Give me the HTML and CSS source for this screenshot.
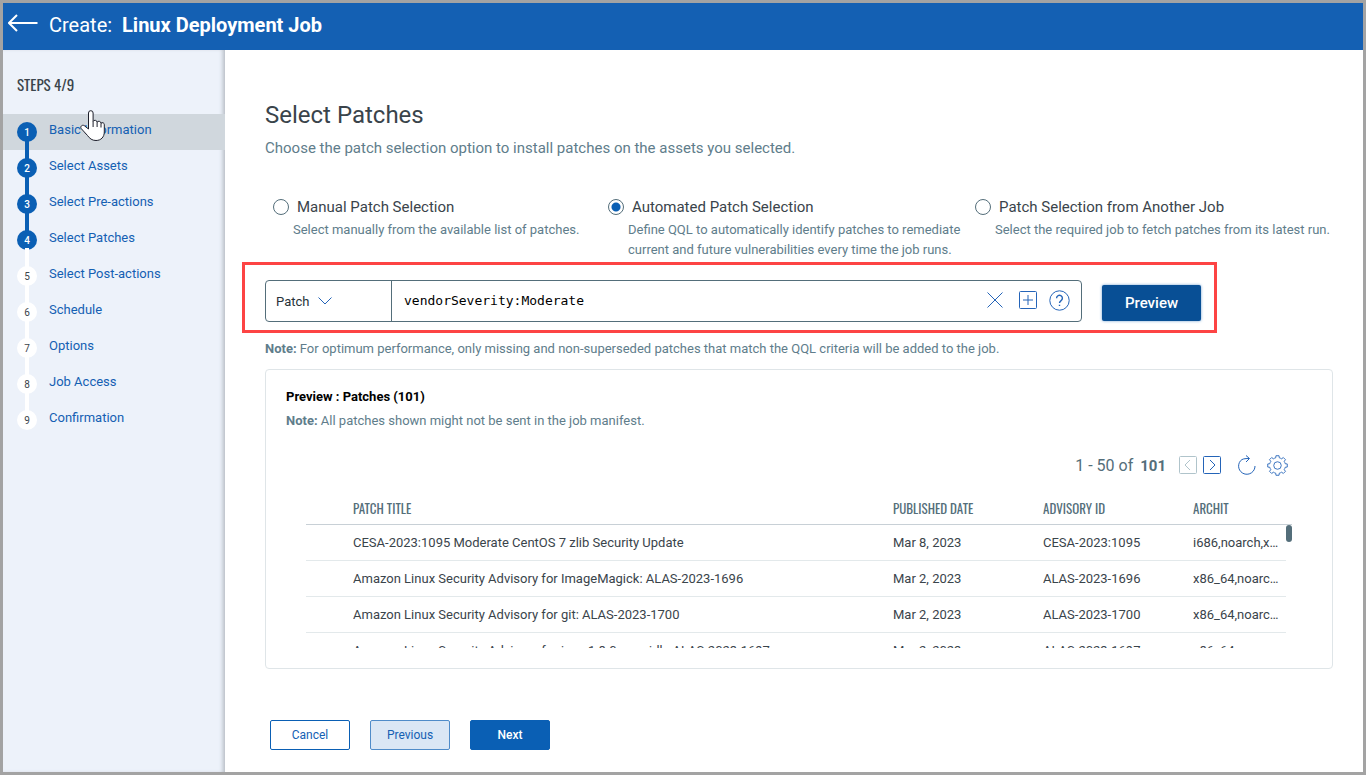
FILE: index.html
```html
<!DOCTYPE html>
<html lang="en">
<head>
    <meta charset="UTF-8">
    <meta name="viewport" content="width=device-width, initial-scale=1.0">
    <title>Create: Linux Deployment Job</title>
    <link rel="stylesheet" href="styles.css">
</head>
<body>
    <header class="topbar">
        <a href="#" class="back" aria-label="Back">
            <svg width="30" height="18" viewBox="0 0 30 18"><path d="M9 1 1 9l8 8M1 9h28.500" /></svg>
        </a>
        <h1>Create: <strong>Linux Deployment Job</strong></h1>
    </header>

    <div class="layout">
        <!-- Wizard steps -->
        <nav class="sidebar">
            <h2>STEPS 4/9</h2>
            <ol class="steps">
                <li class="done hover"><span class="num">1</span><a href="#">Basic Information</a></li>
                <li class="done"><span class="num">2</span><a href="#">Select Assets</a></li>
                <li class="done"><span class="num">3</span><a href="#">Select Pre-actions</a></li>
                <li class="current"><span class="num">4</span><a href="#">Select Patches</a></li>
                <li><span class="num">5</span><a href="#">Select Post-actions</a></li>
                <li><span class="num">6</span><a href="#">Schedule</a></li>
                <li><span class="num">7</span><a href="#">Options</a></li>
                <li><span class="num">8</span><a href="#">Job Access</a></li>
                <li><span class="num">9</span><a href="#">Confirmation</a></li>
            </ol>
            <svg class="pointer" width="28" height="34" viewBox="0 0 28 34">
                <path d="M9.500 20V4a2.300 2.300 0 0 1 4.600 0v8.500a2.100 2.100 0 0 1 4 .8 2.100 2.100 0 0 1 3.900 1 1.900 1.900 0 0 1 3.300 1.500V23c0 5-3.300 8.500-8.300 8.500-4 0-6.300-2-8.500-5l-6.200-6.800c-1.600-2 .8-4.300 2.900-3.100z" />
                <path d="M14.100 12.500V18M18.100 13.300V18M22 14.300V18.500" />
            </svg>
        </nav>

        <main class="content">
            <h2 class="title">Select Patches</h2>
            <p class="subtitle">Choose the patch selection option to install patches on the assets you selected.</p>

            <div class="options">
                <div class="option">
                    <label><input type="radio" name="mode" value="manual">Manual Patch Selection</label>
                    <p>Select manually from the available list of patches.</p>
                </div>
                <div class="option">
                    <label><input type="radio" name="mode" value="auto" checked>Automated Patch Selection</label>
                    <p>Define QQL to automatically identify patches to remediate current and future vulnerabilities every time the job runs.</p>
                </div>
                <div class="option">
                    <label><input type="radio" name="mode" value="job">Patch Selection from Another Job</label>
                    <p>Select the required job to fetch patches from its latest run.</p>
                </div>
            </div>

            <!-- QQL search -->
            <form class="search-row">
                <div class="search">
                    <div class="scope">
                        <select aria-label="Search scope">
                            <option>Patch</option>
                        </select>
                        <svg width="14" height="8" viewBox="0 0 14 8"><path d="M.5 .5 7 7l6.500-6.500" /></svg>
                    </div>
                    <input type="text" class="query" aria-label="Query" value="vendorSeverity:Moderate" spellcheck="false">
                    <div class="tools">
                        <button type="button" aria-label="Clear">
                            <svg width="16" height="16" viewBox="0 0 16 16"><path d="M.5 .5l15 15M15.500 .5l-15 15" /></svg>
                        </button>
                        <button type="button" aria-label="Add">
                            <svg width="18" height="18" viewBox="0 0 18 18"><rect x=".5" y=".5" width="17" height="17" rx="1" /><path d="M9 4v10M4 9h10" /></svg>
                        </button>
                        <button type="button" aria-label="Help">
                            <svg width="21" height="21" viewBox="0 0 21 21"><circle cx="10.500" cy="10.500" r="9.700" /><path stroke-width="1.400" d="M7.600 8.300a2.900 2.900 0 1 1 4.500 2.300c-1.100.8-1.600 1.200-1.600 2.500M10.500 14.700v1.300" /></svg>
                        </button>
                    </div>
                </div>
                <button type="button" class="btn-preview">Preview</button>
            </form>

            <p class="note"><strong>Note:</strong> For optimum performance, only missing and non-superseded patches that match the QQL criteria will be added to the job.</p>

            <section class="card">
                <h3>Preview : Patches (101)</h3>
                <p class="note"><strong>Note:</strong> All patches shown might not be sent in the job manifest.</p>

                <div class="pager">
                    <span class="range">1 - 50 of <strong>101</strong></span>
                    <button type="button" class="prev" aria-label="Previous page" disabled>
                        <svg width="18" height="18" viewBox="0 0 18 18"><rect x=".5" y=".5" width="17" height="17" rx="1" /><path d="M11 4 6 9l5 5" /></svg>
                    </button>
                    <button type="button" class="next" aria-label="Next page">
                        <svg width="18" height="18" viewBox="0 0 18 18"><rect x=".5" y=".5" width="17" height="17" rx="1" /><path d="M7 4l5 5-5 5" /></svg>
                    </button>
                    <button type="button" class="refresh" aria-label="Refresh">
                        <svg width="18" height="20" viewBox="0 0 18 20"><path d="M17 11a8.200 8.200 0 1 1-14.500-5.200C4.300 3.800 6.500 3.500 11 3.500M8 .5l3.500 3-3.500 3.500" /></svg>
                    </button>
                    <button type="button" class="settings" aria-label="Settings">
                        <svg width="21" height="21" viewBox="0 0 24 24">
                            <path d="M20.770 9.980 23.160 10.230V13.770L20.770 14.020A9 9 0 0 1 19.630 16.770L21.140 18.640 18.640 21.140 16.770 19.630A9 9 0 0 1 14.020 20.770L13.770 23.160H10.230L9.980 20.770A9 9 0 0 1 7.230 19.630L5.360 21.140 2.860 18.640 4.370 16.770A9 9 0 0 1 3.230 14.020L.84 13.770V10.230L3.230 9.980A9 9 0 0 1 4.370 7.230L2.860 5.360 5.360 2.860 7.230 4.370A9 9 0 0 1 9.980 3.230L10.230 .84H13.770L14.020 3.230A9 9 0 0 1 16.770 4.370L18.640 2.860 21.140 5.360 19.630 7.230A9 9 0 0 1 20.770 9.980z" />
                            <circle cx="12" cy="12" r="4.300" />
                        </svg>
                    </button>
                </div>

                <div class="grid">
                    <table>
                        <thead>
                            <tr>
                                <th class="col-check"></th>
                                <th>PATCH TITLE</th>
                                <th class="col-mid">PUBLISHED DATE</th>
                                <th class="col-mid">ADVISORY ID</th>
                                <th class="col-arch">ARCHIT</th>
                            </tr>
                        </thead>
                    </table>
                    <div class="rows">
                        <table>
                            <tbody>
                                <tr>
                                    <td class="col-check"></td>
                                    <td>CESA-2023:1095 Moderate CentOS 7 zlib Security Update</td>
                                    <td class="col-mid">Mar 8, 2023</td>
                                    <td class="col-mid">CESA-2023:1095</td>
                                    <td class="col-arch">i686,noarch,x…</td>
                                </tr>
                                <tr>
                                    <td></td>
                                    <td>Amazon Linux Security Advisory for ImageMagick: ALAS-2023-1696</td>
                                    <td>Mar 2, 2023</td>
                                    <td>ALAS-2023-1696</td>
                                    <td>x86_64,noarc…</td>
                                </tr>
                                <tr>
                                    <td></td>
                                    <td>Amazon Linux Security Advisory for git: ALAS-2023-1700</td>
                                    <td>Mar 2, 2023</td>
                                    <td>ALAS-2023-1700</td>
                                    <td>x86_64,noarc…</td>
                                </tr>
                                <tr>
                                    <td></td>
                                    <td>Amazon Linux Security Advisory for java-1.8.0-openjdk: ALAS-2023-1697</td>
                                    <td>Mar 2, 2023</td>
                                    <td>ALAS-2023-1697</td>
                                    <td>x86_64</td>
                                </tr>
                            </tbody>
                        </table>
                        <div class="thumb"></div>
                    </div>
                </div>
            </section>

            <div class="actions">
                <button type="button" class="btn">Cancel</button>
                <button type="button" class="btn btn-prev">Previous</button>
                <button type="button" class="btn btn-next">Next</button>
            </div>
        </main>
    </div>
</body>
</html>
```
FILE: styles.css
```css
* {
    box-sizing: border-box;
}
body {
    margin: 0;
    min-height: 100vh;
    display: flex;
    flex-direction: column;
    border: 3px solid #a3a3a3;
    font-family: Roboto, sans-serif;
    font-size: 13px;
    color: #3a444b;
    background-color: #fff;
}
h1, h2, h3, p, ol {
    margin: 0;
    padding: 0;
}
a {
    text-decoration: none;
}
button, input, select {
    font-family: inherit;
}
button {
    padding: 0;
    cursor: pointer;
}
svg {
    display: block;
    fill: none;
    stroke: #2464b8;
}

/* Top bar */
.topbar {
    display: flex;
    align-items: center;
    height: 47px;
    padding: 0 5px 4px;
    background-color: #1460b3;
    color: #fff;
}
.back {
    margin: 0 11px 4px 0;
}
.back svg {
    stroke: #fff;
    stroke-width: 2;
}
.topbar h1 {
    font-size: 20px;
    font-weight: 400;
}
.topbar strong {
    margin-left: 5px;
    font-weight: 700;
}

.layout {
    display: flex;
    flex: 1;
}

/* Sidebar */
.sidebar {
    position: relative;
    width: 222px;
    flex-shrink: 0;
    background-color: #edf2fa;
    box-shadow: inset -4px 0 4px -2px #b4bac2;
}
.sidebar h2 {
    padding: 23px 14px 18px;
    font-family: Oswald, "Liberation Sans Narrow", Roboto, sans-serif;
    font-size: 15px;
    font-weight: 400;
    line-height: 23px;
}
.steps {
    list-style: none;
}
.steps li {
    position: relative;
    display: flex;
    gap: 12px;
    height: 36px;
    padding: 8px 14px 0;
}
.steps li.hover {
    background-color: #d0d7dd;
}
/* line that joins a step to the next one */
.steps li:not(:last-child)::after {
    content: "";
    position: absolute;
    left: 22px;
    top: 26px;
    width: 4px;
    height: 20px;
    background-color: #fff;
}
.steps li.done::after {
    background-color: #0a5fb4;
}
.num {
    width: 20px;
    height: 20px;
    border-radius: 50%;
    background-color: #fff;
    font-size: 10px;
    line-height: 21px;
    text-align: center;
}
.done .num, .current .num {
    background-color: #0a5fb4;
    color: #fff;
    font-weight: 500;
}
.steps a {
    line-height: 16px;
    color: #1460b3;
}
.pointer {
    position: absolute;
    left: 76px;
    top: 59px;
    stroke: #1d1f2b;
}
.pointer path:first-child {
    fill: #fff;
}

/* Content */
.content {
    flex: 1;
    min-width: 0;
    padding: 50px 30px 22px 40px;
}
.title {
    font-size: 24px;
    font-weight: 400;
    line-height: 30px;
}
.subtitle {
    margin-top: 8px;
    font-size: 15px;
    line-height: 20px;
    color: #607d8b;
}
.options {
    display: grid;
    grid-template-columns: 335px 367px 1fr;
    margin-top: 39px;
    padding-left: 8px;
}
.option label {
    display: flex;
    align-items: center;
    gap: 8px;
    font-size: 15px;
    line-height: 20px;
}
.option input {
    appearance: none;
    width: 16px;
    height: 16px;
    margin: 0;
    border: 1px solid #546e7a;
    border-radius: 50%;
}
.option input:checked {
    background: radial-gradient(circle, #0a5fb4 4px, transparent 5px);
}
.option p {
    max-width: 360px;
    margin-top: 3px;
    padding-left: 20px;
    line-height: 20px;
    color: #607d8b;
}

.search-row {
    display: flex;
    align-items: center;
    gap: 20px;
    margin: 2px 116px 0 -23px;
    padding: 15px 13px 8px 20px;
    border: 3px solid #fd4444;
}
.search {
    display: flex;
    flex: 1;
    height: 42px;
    border: 1px solid #546e7a;
    border-radius: 4px;
}
.scope {
    position: relative;
    width: 126px;
    border-right: 1px solid #546e7a;
}
.scope select {
    appearance: none;
    width: 100%;
    height: 100%;
    padding: 0 10px;
    border: 0;
    background: transparent;
    font-size: 13px;
    color: #263238;
}
.scope svg {
    position: absolute;
    left: 52px;
    top: 16px;
    pointer-events: none;
}
.query {
    flex: 1;
    min-width: 0;
    padding: 0 12px 2px;
    border: 0;
    outline: 0;
    background: transparent;
    font-family: "DejaVu Sans Mono", monospace;
    font-size: 13px;
    color: #000;
}
.tools {
    display: flex;
    align-items: center;
    gap: 12px;
    padding: 0 11px 2px 0;
}
.tools button {
    border: 0;
    background: none;
}
.tools button:first-child {
    margin-right: 4px;
}
.btn-preview {
    width: 99px;
    height: 36px;
    margin-top: 4px;
    border: 0;
    border-radius: 2px;
    background-color: #084f95;
    box-shadow: 0 0 3px #6f9fd0;
    color: #fff;
    font-size: 15px;
    font-weight: 500;
}
.note {
    line-height: 20px;
    color: #607d8b;
}
.search-row + .note {
    margin-top: 6px;
}

/* Preview card */
.card {
    margin-top: 10px;
    padding: 17px 40px 20px 20px;
    border: 1px solid #dfe5e8;
    border-radius: 4px;
}
.card h3 {
    font-size: 13px;
    font-weight: 700;
    line-height: 20px;
    color: #000;
}
.card .note {
    margin-top: 4px;
}
.pager {
    display: flex;
    align-items: center;
    justify-content: flex-end;
    margin: 23px 4px 0 0;
    height: 22px;
    color: #546e7a;
}
.pager button {
    border: 0;
    background: none;
}
.range {
    margin-right: 13px;
    font-size: 16px;
}
.range strong {
    margin-left: 3px;
    font-size: 15px;
}
.prev svg {
    stroke: #b0c4cb;
}
.next {
    margin: 0 17px 0 6px;
}
.settings {
    margin-left: 11px;
}
.grid {
    margin-left: 20px;
}
.grid table {
    width: calc(100% - 6px);
    border-collapse: separate;
    border-spacing: 0;
    table-layout: fixed;
}
th {
    height: 48px;
    padding: 16px 0 0;
    text-align: left;
    font-family: Oswald, "Liberation Sans Narrow", Roboto, sans-serif;
    font-size: 13px;
    font-weight: 400;
    color: #546e7a;
}
.col-check {
    width: 47px;
}
.col-mid {
    width: 150px;
}
.col-arch {
    width: 93px;
}
.rows {
    position: relative;
    height: 124px;
    overflow: hidden;
    border-top: 1px solid #c8d0d6;
}
td {
    height: 36px;
    padding: 0;
    overflow: hidden;
    white-space: nowrap;
    border-bottom: 1px solid #e3e9eb;
}
.thumb {
    position: absolute;
    right: 0;
    top: 0;
    width: 6px;
    height: 17px;
    border-radius: 3px;
    background-color: #546e7a;
}

/* Footer buttons */
.actions {
    display: flex;
    gap: 20px;
    margin: 51px 0 0 5px;
}
.btn {
    width: 80px;
    height: 30px;
    border: 1px solid #0a5fb4;
    border-radius: 2px;
    background-color: #fff;
    color: #1460b3;
    font-size: 12px;
}
.btn-prev {
    border-color: #4f8cc9;
    background-color: #dae7f5;
}
.btn-next {
    background-color: #0a5fb4;
    color: #fff;
    font-weight: 500;
}
```
